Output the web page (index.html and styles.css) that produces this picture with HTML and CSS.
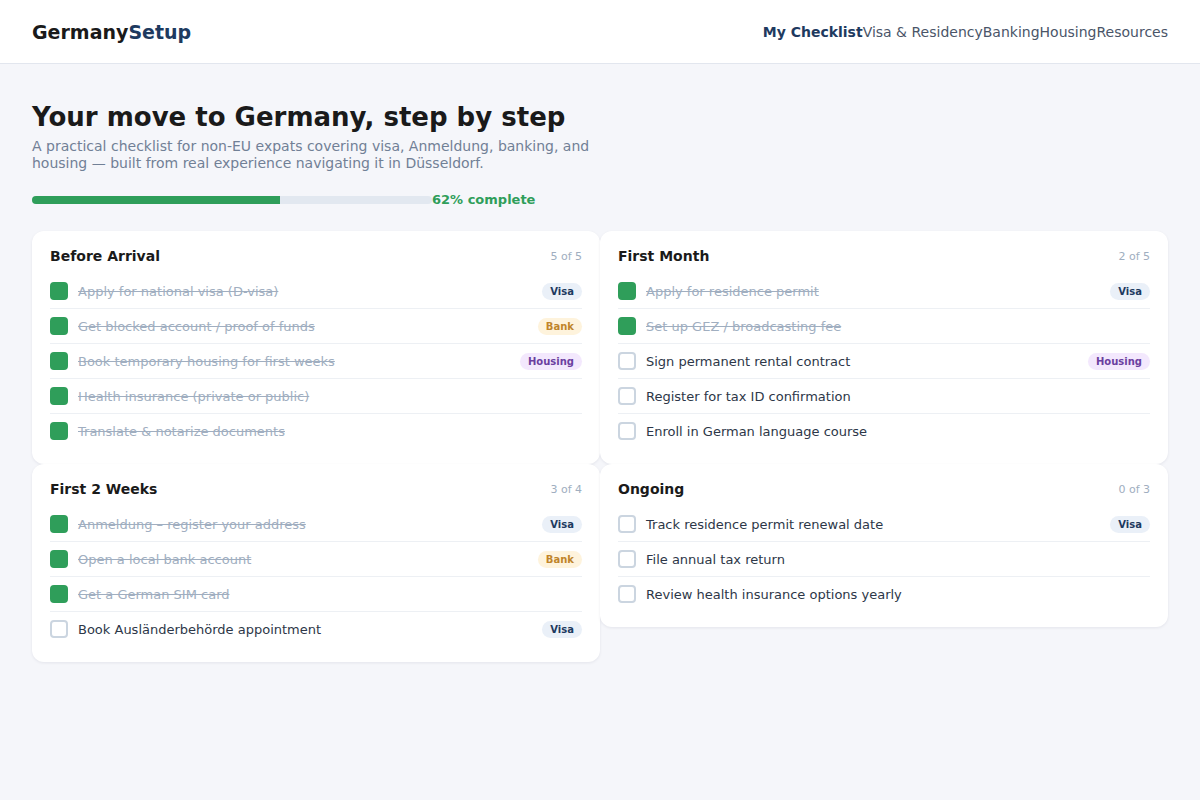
FILE: index.html
```html
<!DOCTYPE html>
<html lang="en">
<head>
<meta charset="utf-8">
<title>GermanySetup — My Checklist</title>
<link rel="stylesheet" href="styles.css">
</head>
<body>
<header class="topbar">
  <div class="logo">Germany<span class="logo-accent">Setup</span></div>
  <nav class="nav">
    <a class="nav-link active" href="#">My Checklist</a>
    <a class="nav-link" href="#">Visa &amp; Residency</a>
    <a class="nav-link" href="#">Banking</a>
    <a class="nav-link" href="#">Housing</a>
    <a class="nav-link" href="#">Resources</a>
  </nav>
</header>

<main class="main">
  <h1 class="title">Your move to Germany, step by step</h1>
  <p class="intro">A practical checklist for non-EU expats covering visa, Anmeldung, banking, and housing — built from real experience navigating it in Düsseldorf.</p>

  <div class="progress">
    <div class="progress-track"><div class="progress-fill" style="width: 62%"></div></div>
    <span class="progress-label">62% complete</span>
  </div>

  <section class="grid">
    <div class="card">
      <div class="card-head"><h2 class="card-title">Before Arrival</h2><span class="card-count">5 of 5</span></div>
      <ul class="tasks">
        <li class="task done"><span class="box"></span><span class="task-text">Apply for national visa (D-visa)</span><span class="tag tag-visa">Visa</span></li>
        <li class="task done"><span class="box"></span><span class="task-text">Get blocked account / proof of funds</span><span class="tag tag-bank">Bank</span></li>
        <li class="task done"><span class="box"></span><span class="task-text">Book temporary housing for first weeks</span><span class="tag tag-housing">Housing</span></li>
        <li class="task done"><span class="box"></span><span class="task-text">Health insurance (private or public)</span></li>
        <li class="task done"><span class="box"></span><span class="task-text">Translate &amp; notarize documents</span></li>
      </ul>
    </div>

    <div class="card">
      <div class="card-head"><h2 class="card-title">First Month</h2><span class="card-count">2 of 5</span></div>
      <ul class="tasks">
        <li class="task done"><span class="box"></span><span class="task-text">Apply for residence permit</span><span class="tag tag-visa">Visa</span></li>
        <li class="task done"><span class="box"></span><span class="task-text">Set up GEZ / broadcasting fee</span></li>
        <li class="task"><span class="box"></span><span class="task-text">Sign permanent rental contract</span><span class="tag tag-housing">Housing</span></li>
        <li class="task"><span class="box"></span><span class="task-text">Register for tax ID confirmation</span></li>
        <li class="task"><span class="box"></span><span class="task-text">Enroll in German language course</span></li>
      </ul>
    </div>

    <div class="card">
      <div class="card-head"><h2 class="card-title">First 2 Weeks</h2><span class="card-count">3 of 4</span></div>
      <ul class="tasks">
        <li class="task done"><span class="box"></span><span class="task-text">Anmeldung – register your address</span><span class="tag tag-visa">Visa</span></li>
        <li class="task done"><span class="box"></span><span class="task-text">Open a local bank account</span><span class="tag tag-bank">Bank</span></li>
        <li class="task done"><span class="box"></span><span class="task-text">Get a German SIM card</span></li>
        <li class="task"><span class="box"></span><span class="task-text">Book Ausländerbehörde appointment</span><span class="tag tag-visa">Visa</span></li>
      </ul>
    </div>

    <div class="card">
      <div class="card-head"><h2 class="card-title">Ongoing</h2><span class="card-count">0 of 3</span></div>
      <ul class="tasks">
        <li class="task"><span class="box"></span><span class="task-text">Track residence permit renewal date</span><span class="tag tag-visa">Visa</span></li>
        <li class="task"><span class="box"></span><span class="task-text">File annual tax return</span></li>
        <li class="task"><span class="box"></span><span class="task-text">Review health insurance options yearly</span></li>
      </ul>
    </div>
  </section>
</main>
</body>
</html>
```

FILE: styles.css
```css
* {
  box-sizing: border-box;
}

body {
  margin: 0;
  background: #f5f6fa;
  font-family: "DejaVu Sans", Verdana, sans-serif;
  color: #1a1a1a;
}

/* Top bar */
.topbar {
  height: 64px;
  background: #ffffff;
  border-bottom: 1px solid #e2e6ee;
  display: flex;
  align-items: center;
  justify-content: space-between;
  padding: 0 32px;
}

.logo {
  font-size: 19px;
  font-weight: bold;
  color: #1a1a1a;
}

.logo-accent {
  color: #1e3a5f;
}

.nav {
  display: flex;
}

.nav-link {
  font-size: 14px;
  color: #4a5568;
  text-decoration: none;
}

.nav-link.active {
  color: #1e3a5f;
  font-weight: bold;
}

/* Page body */
.main {
  padding: 36px 32px;
}

.title {
  margin: 0 0 4px;
  font-size: 26px;
  line-height: 34px;
  font-weight: bold;
  color: #1a1a1a;
}

.intro {
  margin: 0;
  max-width: 565px;
  font-size: 14px;
  line-height: 17px;
  color: #718096;
}

.progress {
  display: flex;
  align-items: center;
  margin: 20px 0 24px;
}

.progress-track {
  width: 400px;
  height: 8px;
  border-radius: 4px;
  background: #e2e8f0;
  overflow: hidden;
}

.progress-fill {
  height: 100%;
  background: #2f9e5a;
}

.progress-label {
  font-size: 13px;
  font-weight: bold;
  color: #2f9e5a;
}

/* Phase cards */
.grid {
  display: grid;
  grid-template-columns: 1fr 1fr;
  align-items: start;
}

.card {
  background: #ffffff;
  border-radius: 12px;
  padding: 17px 18px 16px;
  box-shadow: 0 1px 3px rgba(20, 30, 60, 0.08);
}

.card-head {
  display: flex;
  align-items: center;
  justify-content: space-between;
  margin-bottom: 9px;
}

.card-title {
  margin: 0;
  font-size: 14px;
  line-height: 17px;
  font-weight: bold;
  color: #1a1a1a;
}

.card-count {
  font-size: 11px;
  color: #a0aec0;
}

.tasks {
  list-style: none;
  margin: 0;
  padding: 0;
}

.task {
  display: flex;
  align-items: center;
  padding: 8px 0;
  border-bottom: 1px solid #edf0f4;
}

.task:last-child {
  border-bottom: none;
}

.box {
  flex: none;
  width: 18px;
  height: 18px;
  border-radius: 4px;
  border: 2px solid #cbd5e0;
  background: #ffffff;
}

.task.done .box {
  background: #2f9e5a;
  border-color: #2f9e5a;
}

.task-text {
  flex: 1;
  margin-left: 10px;
  font-size: 13px;
  color: #2d3748;
}

.task.done .task-text {
  color: #a0aec0;
  text-decoration: line-through;
}

.tag {
  flex: none;
  font-size: 10px;
  font-weight: bold;
  line-height: 13px;
  padding: 2px 8px;
  border-radius: 9px;
}

.tag-visa {
  background: #eaf0f8;
  color: #1e3a5f;
}

.tag-bank {
  background: #fef3dc;
  color: #c0842a;
}

.tag-housing {
  background: #f3e8fd;
  color: #6b3fa0;
}
```
